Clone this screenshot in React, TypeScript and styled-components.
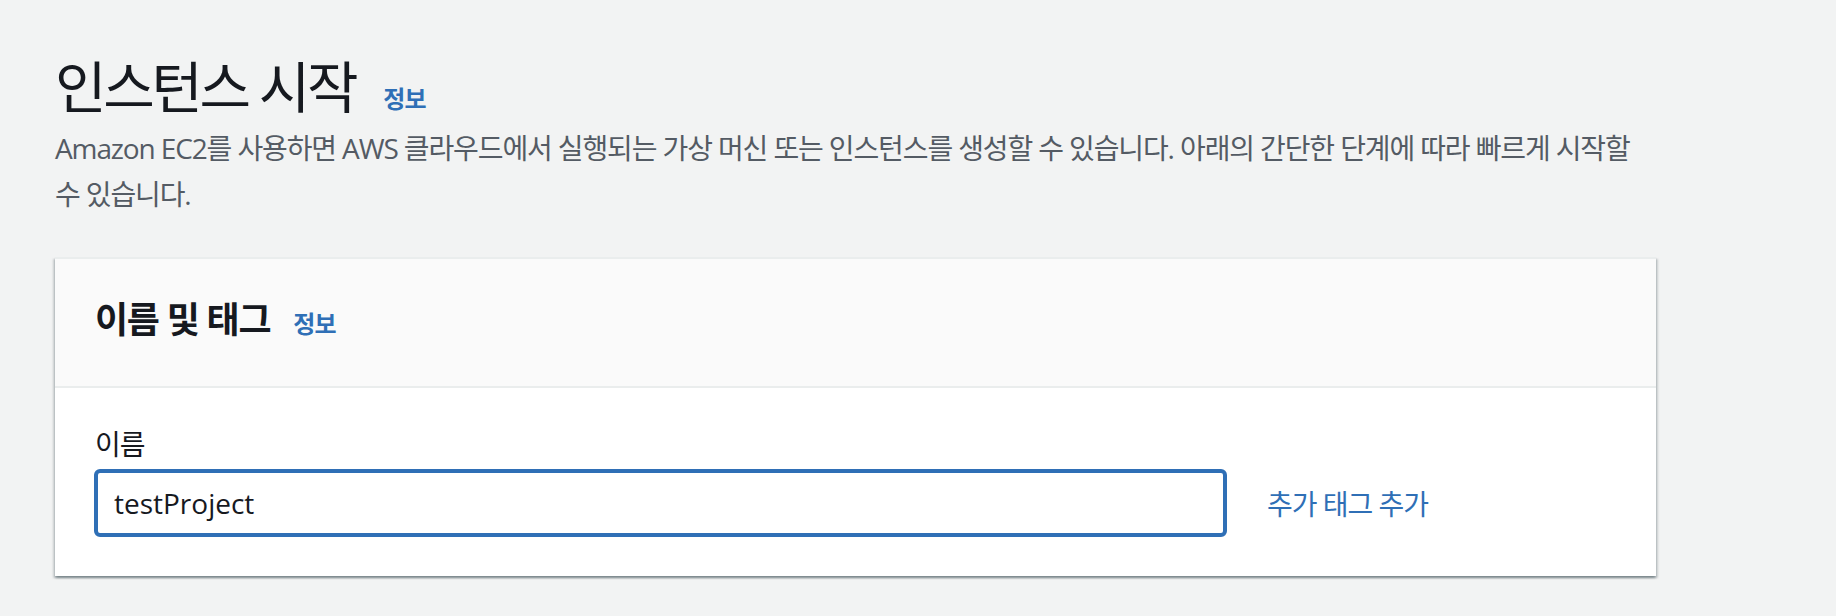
import styled, { createGlobalStyle } from 'styled-components';

const GlobalStyle = createGlobalStyle`
  html, body {
    margin: 0;
    padding: 0;
    background: #f2f3f3;
  }
  body {
    font-family: 'Open Sans', 'Noto Sans CJK KR', sans-serif;
    color: #16191f;
  }
`;

const Page = styled.div`
  padding: 50px 0 40px 55px;
`;

const Content = styled.div`
  width: 1601px;
`;

const TitleRow = styled.div`
  display: flex;
  align-items: baseline;
`;

const Title = styled.h1`
  margin: 0;
  font-size: 56px;
  line-height: 72px;
  font-weight: 400;
  letter-spacing: -0.06em;
  color: #16191f;
`;

const InfoLink = styled.a<{ $gap: number }>`
  margin-left: ${(p) => p.$gap}px;
  font-size: 24px;
  font-weight: 700;
  letter-spacing: -0.03em;
  color: #2f6fb6;
  text-decoration: none;
  cursor: pointer;
`;

const Description = styled.p`
  margin: 3px 0 0;
  font-size: 28px;
  line-height: 46px;
  letter-spacing: -0.04em;
  color: #545b64;
`;

const Card = styled.section`
  margin-top: 40px;
  background: #ffffff;
  border-top: 2px solid #eaeded;
  box-shadow: 0 2px 2px 0 rgba(0, 28, 36, 0.3), 2px 2px 2px 0 rgba(0, 28, 36, 0.15),
    -2px 2px 2px 0 rgba(0, 28, 36, 0.15);
`;

const CardHeader = styled.div`
  display: flex;
  align-items: baseline;
  padding: 37px 40px 42px;
  background: #fafafa;
  border-bottom: 2px solid #eaeded;
`;

const CardTitle = styled.h2`
  margin: 0;
  font-size: 36px;
  line-height: 48px;
  font-weight: 700;
  letter-spacing: -0.036em;
  color: #16191f;
`;

const CardBody = styled.div`
  padding: 34px 40px 39px;
`;

const Label = styled.label`
  display: block;
  font-size: 28px;
  line-height: 44px;
  letter-spacing: -0.036em;
  color: #16191f;
`;

const FieldRow = styled.div`
  display: flex;
  align-items: center;
  margin-top: 3px;
`;

const Input = styled.input`
  box-sizing: border-box;
  width: 1133px;
  height: 68px;
  margin-left: -1px;
  padding: 0 16px;
  border: 4px solid #2f6fb6;
  border-radius: 6px;
  outline: none;
  background: #ffffff;
  font-family: 'Open Sans', 'Noto Sans CJK KR', sans-serif;
  font-size: 28px;
  color: #16191f;
`;

const AddLink = styled.a`
  margin-left: 40px;
  font-size: 28px;
  letter-spacing: -0.036em;
  color: #2f6fb6;
  text-decoration: none;
  cursor: pointer;
`;

const App = () => {
  return (
    <>
      <GlobalStyle />
      <Page>
        <Content>
          <TitleRow>
            <Title>인스턴스 시작</Title>
            <InfoLink $gap={28}>정보</InfoLink>
          </TitleRow>
          <Description>
            Amazon EC2를 사용하면 AWS 클라우드에서 실행되는 가상 머신 또는 인스턴스를 생성할 수 있습니다. 아래의 간단한
            단계에 따라 빠르게 시작할 수 있습니다.
          </Description>
          <Card>
            <CardHeader>
              <CardTitle>이름 및 태그</CardTitle>
              <InfoLink $gap={23}>정보</InfoLink>
            </CardHeader>
            <CardBody>
              <Label htmlFor="instance-name">이름</Label>
              <FieldRow>
                <Input id="instance-name" defaultValue="testProject" />
                <AddLink>추가 태그 추가</AddLink>
              </FieldRow>
            </CardBody>
          </Card>
        </Content>
      </Page>
    </>
  );
};

export default App;
